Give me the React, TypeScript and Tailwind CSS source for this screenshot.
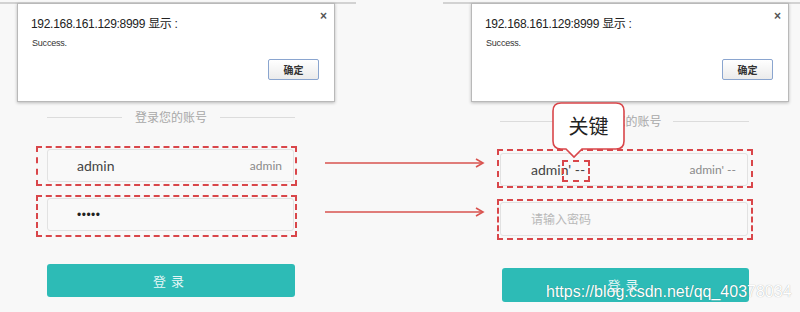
import React from "react";

const FONT = "font-['Lato','Noto_Sans','Noto_Sans_CJK_SC',sans-serif]";

function Dialog({ className }: { className: string }) {
  return (
    <div
      className={`absolute top-[3px] w-[318px] h-[99px] bg-white border border-[#b9b9b9] shadow-[0_1px_3px_rgba(0,0,0,0.25)] ${className}`}
    >
      <div className="absolute right-[7px] top-[6px] text-[12px] leading-none text-[#555] font-['Liberation_Sans',sans-serif] font-bold">
        ×
      </div>
      <div className="pl-[13px] pt-[12px] text-[12px] leading-[16px] tracking-[-0.3px] text-[#222] font-['Liberation_Sans','Noto_Sans_CJK_SC',sans-serif] whitespace-pre">
        192.168.161.129:8999 显示 :
      </div>
      <div className="pl-[14px] pt-[5px] text-[9px] leading-[12px] tracking-[-0.2px] text-[#333] font-['Liberation_Sans',sans-serif]">
        Success.
      </div>
      <div className="flex justify-end pr-[15px] pt-[10px]">
        <div className="w-[51px] h-[21px] flex items-center justify-center border border-[#8aa5cf] rounded-[2px] bg-gradient-to-b from-[#ffffff] to-[#ebebeb] text-[10px] font-bold text-[#333] font-['Noto_Sans_CJK_SC',sans-serif]">
          确定
        </div>
      </div>
    </div>
  );
}

function Divider({ leftLen, rightLen }: { leftLen: string; rightLen: string }) {
  return (
    <div className="flex items-center h-[16px]">
      <div className={`h-px bg-[#dcdcdc] ${leftLen}`} />
      <div className="flex-1 text-center text-[12px] text-[#a8a8a8] font-['Noto_Sans_CJK_SC',sans-serif]">
        登录您的账号
      </div>
      <div className={`h-px bg-[#dcdcdc] ${rightLen}`} />
    </div>
  );
}

function Arrow({ top }: { top: string }) {
  return (
    <svg className={`absolute left-[323px] ${top}`} width="164" height="12" viewBox="0 0 164 12">
      <line x1="2" y1="6" x2="160" y2="6" stroke="#d9534f" strokeWidth="1.6" />
      <polyline points="153,2 160,6 153,10" fill="none" stroke="#d9534f" strokeWidth="1.6" />
    </svg>
  );
}

export default function App() {
  return (
    <div className={`relative w-[800px] h-[312px] overflow-hidden bg-[#f8f8f8] ${FONT}`}>
      <div className="flex h-full">
        {/* Left panel */}
        <div className="w-[356px] mt-[2px] border-t-2 border-[#d2d2d2] pl-[47px]">
          <div className="w-[248px] flex flex-col">
            <div className="mt-[105px]">
              <Divider leftLen="w-[75px]" rightLen="w-[75px]" />
            </div>
            <div className="mt-[21px] -ml-[11px] w-[261px] border-2 border-dashed border-[#d9464a] pt-[1px] pb-[2px]">
              <div className="ml-[9px] w-[247px] h-[33px] bg-[#f9f9f9] border border-[#e2e2e2] rounded-[3px] flex items-center pl-[29px] pr-[11px]">
                <span className="text-[14px] text-[#444]">admin</span>
                <span className="ml-auto text-[12px] text-[#8a8a8a]">admin</span>
              </div>
            </div>
            <div className="mt-[9px] -ml-[11px] w-[261px] border-2 border-dashed border-[#d9464a] pt-[1px] pb-[4px]">
              <div className="ml-[9px] w-[247px] h-[33px] bg-[#f9f9f9] border border-[#e2e2e2] rounded-[3px] flex items-center pl-[29px]">
                <span className="text-[12px] tracking-[0.5px] text-[#222] font-['Liberation_Sans',sans-serif]">•••••</span>
              </div>
            </div>
            <div className="mt-[27px] w-[248px] h-[33px] rounded-[3px] bg-[#2dbbb6] flex items-center justify-center text-[13px] tracking-[5px] text-[#e6f7f6] font-['Noto_Sans_CJK_SC',sans-serif]">
              登录
            </div>
          </div>
        </div>
        <div className="w-[87px]" />
        {/* Right panel */}
        <div className="flex-1 mt-[2px] border-t-2 border-[#d2d2d2] pl-[57px]">
          <div className="w-[249px] flex flex-col">
            <div className="mt-[109px]">
              <Divider leftLen="w-[78px]" rightLen="w-[76px]" />
            </div>
            <div className="mt-[20px] -ml-[3px] w-[256px] border-2 border-dashed border-[#d9464a] pt-[2px]">
              <div className="ml-[1px] w-[248px] h-[33px] bg-[#f9f9f9] border border-[#e2e2e2] rounded-[3px] flex items-center pl-[30px] pr-[11px]">
                <span className="text-[14px] text-[#444] whitespace-pre">admin' --</span>
                <span className="ml-auto text-[12px] text-[#8a8a8a] whitespace-pre">admin' --</span>
              </div>
            </div>
            <div className="mt-[11px] -ml-[3px] w-[256px] border-2 border-dashed border-[#d9464a] pt-[1px] pb-[2px]">
              <div className="ml-[1px] w-[248px] h-[34px] bg-[#f9f9f9] border border-[#e2e2e2] rounded-[3px] flex items-center pl-[30px]">
                <span className="text-[12px] text-[#b8b8b8] font-['Noto_Sans_CJK_SC',sans-serif]">请输入密码</span>
              </div>
            </div>
            <div className="mt-[28px] w-[247px] h-[34px] ml-[2px] rounded-[3px] bg-[#2dbbb6] flex items-center justify-center text-[13px] tracking-[5px] text-[#e6f7f6] font-['Noto_Sans_CJK_SC',sans-serif]">
              登录
            </div>
          </div>
        </div>
      </div>

      {/* Alert dialogs */}
      <Dialog className="left-[17px]" />
      <Dialog className="left-[471px]" />

      {/* Arrows */}
      <Arrow top="top-[157px]" />
      <Arrow top="top-[206px]" />

      {/* Small dashed highlight */}
      <div className="absolute left-[562px] top-[160px] w-[28px] h-[22px] border-2 border-dashed border-[#d9464a]" />

      {/* Callout */}
      <svg className="absolute left-[551px] top-[101px]" width="77" height="60" viewBox="0 0 77 60">
        <path
          d="M10 2 H65 Q73 2 73 10 V40 Q73 48 65 48 H31 L23 56 L15 48 H10 Q2 48 2 40 V10 Q2 2 10 2 Z"
          fill="#ffffff"
          stroke="#d9464a"
          strokeWidth="1.6"
        />
      </svg>
      <div className="absolute left-[553px] top-[103px] w-[71px] h-[45px] flex items-center justify-center text-[20px] text-[#222] font-['Noto_Sans_CJK_SC',sans-serif]">
        关键
      </div>

      {/* Watermark */}
      <div className="absolute left-[546px] top-[282px] text-[16px] leading-[20px] text-white font-['Liberation_Sans',sans-serif] [text-shadow:0_0_1px_rgba(0,0,0,0.35)]">
        https://blog.csdn.net/qq_40378034
      </div>
    </div>
  );
}
